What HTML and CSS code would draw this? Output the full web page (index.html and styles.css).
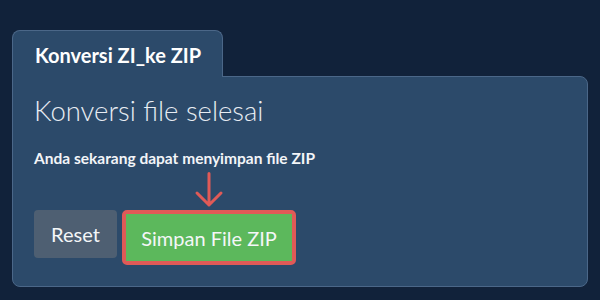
FILE: index.html
```html
<!DOCTYPE html>
<html>
<head>
<meta charset="utf-8">
<link rel="stylesheet" href="styles.css">
</head>
<body>
<div class="wrap">
  <div class="tab">Konversi ZI_ke ZIP</div>
  <div class="panel">
    <h1 class="title">Konversi file selesai</h1>
    <p class="note">Anda sekarang dapat menyimpan file ZIP</p>
    <div class="actions">
      <button class="btn btn-reset">Reset</button>
      <div class="save-wrap">
        <svg class="arrow" width="30" height="37" viewBox="0 0 30 37">
          <path d="M15 1.5 V33 M3 21 L15 33 L27 21" fill="none" stroke="#e05a57" stroke-width="3" stroke-linecap="round" stroke-linejoin="round"/>
        </svg>
        <div class="hl">
          <button class="btn btn-save">Simpan File ZIP</button>
        </div>
      </div>
    </div>
  </div>
</div>
</body>
</html>
```

FILE: styles.css
```css
html, body {
  margin: 0;
  padding: 0;
  background: #11223a;
  font-family: Lato, "Open Sans", sans-serif;
  color: #eef2f6;
}
.wrap {
  padding: 30px 12px 0 12px;
  display: flex;
  flex-direction: column;
  align-items: flex-start;
}
.tab {
  position: relative;
  z-index: 1;
  box-sizing: border-box;
  width: 211px;
  height: 47px;
  margin-bottom: -1px;
  padding: 0 0 0 22px;
  background: #2c4a6a;
  border: 1px solid #4b6788;
  border-bottom: none;
  border-radius: 8px 8px 0 0;
  font-weight: 700;
  font-size: 20px;
  line-height: 48px;
  color: #ffffff;
}
.panel {
  box-sizing: border-box;
  width: 576px;
  height: 211px;
  background: #2c4a6a;
  border: 1px solid #4b6788;
  border-radius: 0 8px 8px 8px;
  padding: 18px 20px 0 21px;
}
.title {
  margin: 0;
  font-size: 27.5px;
  font-weight: 300;
  line-height: 31px;
  color: #e8edf3;
}
.note {
  margin: 23px 0 0 0;
  font-size: 15.5px;
  font-weight: 700;
  line-height: 18px;
  color: #f3f5f8;
}
.actions {
  display: flex;
  align-items: flex-start;
  gap: 5px;
  margin-top: 5px;
}
.btn {
  border: none;
  font-family: inherit;
  font-size: 20px;
  color: #f4f6f8;
  border-radius: 4px;
  cursor: pointer;
  padding: 0;
}
.btn-reset {
  margin-top: 38px;
  width: 83px;
  height: 48px;
  background: #4e5f72;
}
.save-wrap {
  display: flex;
  flex-direction: column;
  align-items: center;
}
.arrow {
  display: block;
  margin-bottom: 1px;
}
.hl {
  border: 4px solid #e05a57;
  border-radius: 5px;
  background: #e05a57;
}
.btn-save {
  display: block;
  width: 166px;
  height: 47px;
  background: #5cb85c;
  border-radius: 0;
}
```
